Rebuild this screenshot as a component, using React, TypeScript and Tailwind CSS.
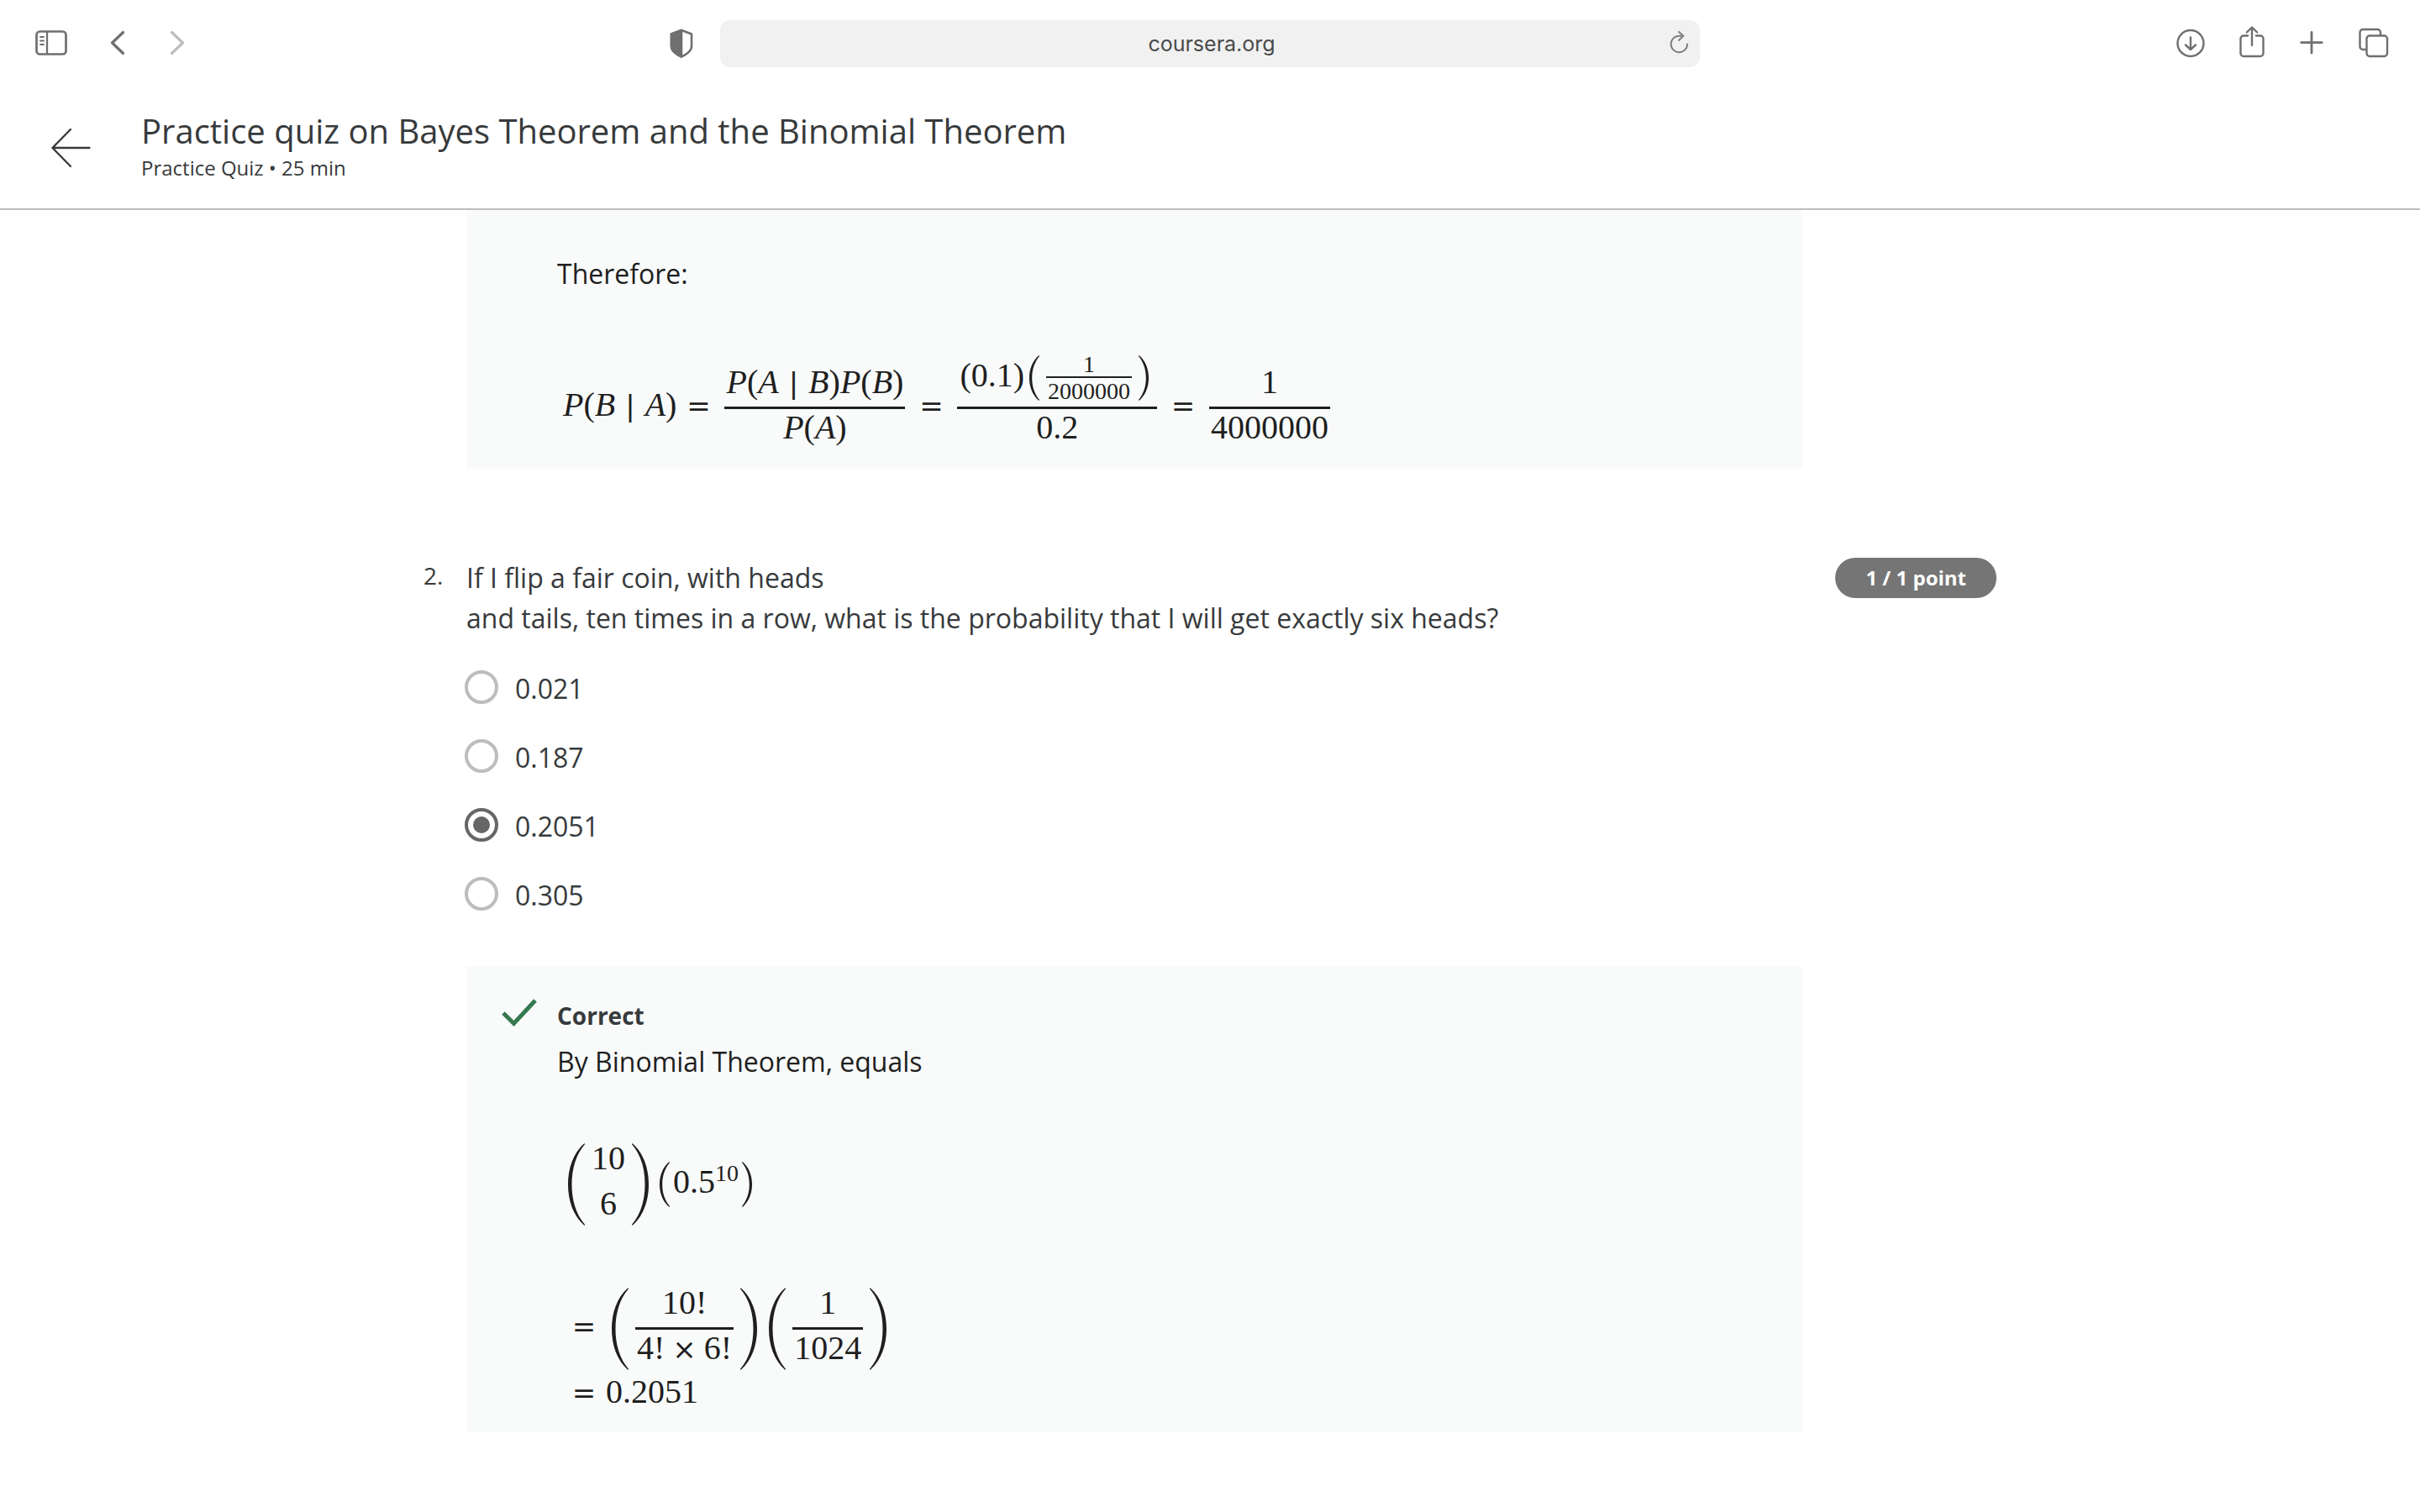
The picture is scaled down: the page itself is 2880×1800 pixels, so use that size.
import React from "react";

const sans = "font-['Open_Sans',sans-serif]";

function IconButton({ label, className = "", children }: { label: string; className?: string; children: React.ReactNode }) {
  return (
    <button type="button" aria-label={label} className={`flex shrink-0 items-center justify-center ${className}`}>
      {children}
    </button>
  );
}

function Toolbar() {
  return (
    <div className="grid grid-cols-[1fr_1166px_1fr] items-center pt-6 text-[#6f6f6f]">
      <div className="flex items-center pr-7 pl-10">
        <IconButton label="Show sidebar">
          <svg width="42" height="42" viewBox="0 0 42 42" fill="none" stroke="currentColor" strokeWidth="2.700">
            <rect x="3.500" y="6.500" width="35" height="27" rx="4" />
            <path d="M16 7v26" strokeWidth="2.300" />
            <path d="M8 13h4M8 17.500h4M8 22h4" strokeWidth="2" strokeLinecap="round" />
          </svg>
        </IconButton>
        <IconButton label="Back" className="ml-11">
          <svg width="28" height="42" viewBox="0 0 28 42" fill="none" stroke="currentColor" strokeWidth="3.200" strokeLinecap="round" strokeLinejoin="round">
            <path d="M20.500 7.500L7.500 20l13 12.500" />
          </svg>
        </IconButton>
        <IconButton label="Forward" className="ml-11 text-[#bdbdbd]">
          <svg width="28" height="42" viewBox="0 0 28 42" fill="none" stroke="currentColor" strokeWidth="3.200" strokeLinecap="round" strokeLinejoin="round">
            <path d="M6.500 7.500l13 12.500-13 12.500" />
          </svg>
        </IconButton>
        <IconButton label="Privacy report" className="ml-auto">
          <svg width="36" height="42" viewBox="0 0 36 42" fill="none" stroke="currentColor" strokeWidth="2.600" strokeLinejoin="round">
            <path d="M18 5L30 9.500V24.500C30 30 23.500 34 18 36.500C12.500 34 6 30 6 24.500V9.500z" />
            <path d="M18 5V36.500C12.500 34 6 30 6 24.500V9.500z" fill="currentColor" />
          </svg>
        </IconButton>
      </div>
      <div className="relative flex h-14 items-center justify-center rounded-xl bg-[#f1f1f1]">
        <input
          aria-label="Address"
          defaultValue="coursera.org"
          className="w-full bg-transparent pl-1 text-center font-[Inter,sans-serif] text-[25px] leading-8 text-[#4a4a4a] outline-none"
        />
        <button type="button" aria-label="Reload" className="absolute right-3 text-[#7f7f7f]">
          <svg width="26" height="30" viewBox="0 0 26 30" fill="none" stroke="currentColor" strokeWidth="2" strokeLinecap="round" strokeLinejoin="round">
            <path d="M23 15.500A9.700 9.700 0 1 1 13.300 5.800h4.500" />
            <path d="M13 1l5.300 4.800-5.300 5.200" />
          </svg>
        </button>
      </div>
      <div className="flex items-center justify-end gap-8 pr-[34px]">
        <IconButton label="Downloads">
          <svg width="40" height="42" viewBox="0 0 40 42" fill="none" stroke="currentColor" strokeWidth="2.400" strokeLinecap="round" strokeLinejoin="round">
            <circle cx="19" cy="20.500" r="15.500" />
            <path d="M19 13.500v14.500M13 22.500l6 5.500 6-5.500" />
          </svg>
        </IconButton>
        <IconButton label="Share">
          <svg width="40" height="42" viewBox="0 0 40 42" fill="none" stroke="currentColor" strokeWidth="2.400" strokeLinecap="round" strokeLinejoin="round">
            <path d="M15 11.500H10a3.500 3.500 0 0 0-3.500 3.500v17.500A3.500 3.500 0 0 0 10 36h20a3.500 3.500 0 0 0 3.500-3.500V15a3.500 3.500 0 0 0-3.500-3.500h-5" />
            <path d="M20 23V2M13.800 7.500L20 1.500 26.200 7.500" />
          </svg>
        </IconButton>
        <IconButton label="New tab">
          <svg width="40" height="42" viewBox="0 0 40 42" fill="none" stroke="currentColor" strokeWidth="2.800" strokeLinecap="round">
            <path d="M19 7.500v24.500M6.700 19.700h24.600" />
          </svg>
        </IconButton>
        <IconButton label="Tab overview">
          <svg width="42" height="42" viewBox="0 0 42 42" fill="none" stroke="currentColor" strokeWidth="2.400" strokeLinejoin="round">
            <rect x="12.500" y="11.500" width="24.500" height="24.500" rx="3.500" />
            <path d="M12.500 28H8a3.500 3.500 0 0 1-3.500-3.500V7.500A3.500 3.500 0 0 1 8 4h17.500A3.500 3.500 0 0 1 29 7.500v4" />
          </svg>
        </IconButton>
      </div>
    </div>
  );
}

function QuizHeader() {
  return (
    <header className="flex items-center border-b-2 border-[#bdbdbd] px-[60px] pt-12 pb-8 text-[#373a3c]">
      <button type="button" aria-label="Back to course" className="mt-2 shrink-0">
        <svg width="48" height="48" viewBox="0 0 48 48" fill="none" stroke="currentColor" strokeWidth="2.300" strokeLinecap="round">
          <path d="M2.500 24h44M24 2L2.500 24L24 46" />
        </svg>
      </button>
      <div className="ml-[60px]">
        <h1 className="text-[40px] leading-[56px]">Practice quiz on Bayes Theorem and the Binomial Theorem</h1>
        <p className="text-2xl leading-8">Practice Quiz • 25 min</p>
      </div>
    </header>
  );
}

/* Tall brackets, drawn to the height of what they enclose. */
function Paren({ side, size }: { side: "left" | "right"; size: "md" | "lg" }) {
  const flip = side === "right" ? "scale-x-[-1]" : "";
  return size === "lg" ? (
    <svg aria-hidden width="20" height="98" viewBox="0 0 20 98" fill="currentColor" className={`shrink-0 ${flip}`}>
      <path d="M19.500 0C6 12 0 30 0 49s6 37 19.500 49l.5-1.200C9 84 4.500 67 4.500 49S9 14 20 1.200z" />
    </svg>
  ) : (
    <svg aria-hidden width="12" height="54" viewBox="0 0 12 54" fill="currentColor" className={`shrink-0 ${flip}`}>
      <path d="M11.300 0C3.500 7 0 16.500 0 27s3.500 20 11.300 27l.7-1C6 45.500 3.200 37 3.200 27S6 8.500 12 1z" />
    </svg>
  );
}

function Fraction({ top, bottom, small = false }: { top: React.ReactNode; bottom: React.ReactNode; small?: boolean }) {
  return small ? (
    <span className="inline-flex flex-col text-center text-[28px] leading-[29px]">
      <span className="border-b-2 border-current">{top}</span>
      <span className="px-[2px] pt-px">{bottom}</span>
    </span>
  ) : (
    <span className="inline-flex flex-col text-center leading-[43px]">
      <span className="flex h-[54px] justify-center border-b-3 border-current px-[2px]">{top}</span>
      <span className="h-[51px] px-[2px]">{bottom}</span>
    </span>
  );
}

const Equals = () => (
  <span className="flex w-6 justify-center pb-1 font-['DejaVu_Sans',sans-serif] text-[34px]">=</span>
);

const Given = () => <span className="mx-3 font-['DejaVu_Sans',sans-serif] text-[34px] leading-none">|</span>;

const Times = () => <span className="mx-[9px] font-['DejaVu_Sans',sans-serif] text-[34px] leading-none">×</span>;

function BayesFormula() {
  return (
    <div className="flex items-center text-[40px] leading-[47px]">
      <span className="pb-2">
        <i>P</i>(<i>B</i>
        <Given />
        <i>A</i>)
      </span>
      <span className="ml-[14px] flex items-center gap-[19px]">
        <Equals />
        <Fraction
          top={
            <span>
              <i>P</i>(<i>A</i>
              <Given />
              <i>B</i>)<i>P</i>(<i>B</i>)
            </span>
          }
          bottom={
            <>
              <i>P</i>(<i>A</i>)
            </>
          }
        />
        <Equals />
        <span className="inline-flex flex-col text-center leading-[43px]">
          <span className="flex h-[66px] border-b-3 border-current pr-[10px] pl-[3px]">
            <span className="pt-1">(0.1)</span>
            <span className="mb-1.5 ml-1.5 flex items-center gap-2">
              <Paren side="left" size="md" />
              <Fraction small top="1" bottom="2000000" />
              <Paren side="right" size="md" />
            </span>
          </span>
          <span className="h-[63px]">0.2</span>
        </span>
        <Equals />
        <Fraction top="1" bottom="4000000" />
      </span>
    </div>
  );
}

function BinomialFormula() {
  return (
    <div className="text-[40px] leading-[45px]">
      <div className="flex items-center pl-[13px]">
        <Paren side="left" size="lg" />
        <span className="mx-2 flex flex-col gap-2 pb-2 text-center leading-[46px]">
          <span>10</span>
          <span>6</span>
        </span>
        <Paren side="right" size="lg" />
        <span className="ml-[13px] flex items-center">
          <Paren side="left" size="md" />
          <span className="mx-1 pb-2">
            0.5<sup className="-top-[14px] text-[28px] leading-none">10</sup>
          </span>
          <Paren side="right" size="md" />
        </span>
      </div>
      <div className="mt-[65px] flex items-center pl-5">
        <Equals />
        <span className="ml-[21px] flex items-center gap-2">
          <Paren side="left" size="lg" />
          <Fraction
            top="10!"
            bottom={
              <>
                4!
                <Times />
                6!
              </>
            }
          />
          <Paren side="right" size="lg" />
        </span>
        <span className="ml-[14px] flex items-center gap-2">
          <Paren side="left" size="lg" />
          <Fraction top="1" bottom="1024" />
          <Paren side="right" size="lg" />
        </span>
      </div>
      <div className="flex items-baseline gap-[14px] pl-5">
        <Equals />
        <span>0.2051</span>
      </div>
    </div>
  );
}

const choices = ["0.021", "0.187", "0.2051", "0.305"];

function Choices() {
  return (
    <div role="radiogroup" aria-label="Answers" className="mt-9 flex flex-col gap-[34px]">
      {choices.map((choice) => (
        <label key={choice} className="flex h-12 items-center gap-5">
          <input
            type="radio"
            name="answer"
            defaultChecked={choice === "0.2051"}
            className="-ml-0.5 mb-1 flex size-10 shrink-0 appearance-none items-center justify-center rounded-full border-4 border-[#bdbdbd] checked:border-[#666] checked:before:size-5 checked:before:rounded-full checked:before:bg-[#666]"
          />
          <span>{choice}</span>
        </label>
      ))}
    </div>
  );
}

export default function App() {
  return (
    <div className={`min-h-screen bg-white ${sans}`}>
      <Toolbar />
      <QuizHeader />
      <main className="pr-[504px] pl-[504px] text-[32px] leading-[48px] text-[#373a3c]">
        <section className="mr-[231px] ml-[51px] bg-[#f9fbfa] px-[108px] pt-[52px] pb-2 text-[#1f1f1f]">
          <p>Therefore:</p>
          <div className="mt-[71px] pl-[7px] font-['Liberation_Serif',serif]">
            <BayesFormula />
          </div>
        </section>
        <section className="mt-[106px] grid grid-cols-[51px_1fr_auto] items-start">
          <span className="text-[28px] leading-[42px]">2.</span>
          <div className="mr-[39px]">
            <p>
              If I flip a fair coin, with heads
              <br />
              and tails, ten times in a row, what is the probability that I will get exactly six heads?
            </p>
            <Choices />
            <div className="mt-[60px] bg-[#f9fbfa] px-[42px] pt-[35px] pb-5">
              <div className="flex items-center">
                <svg aria-hidden width="42" height="40" viewBox="0 0 42 40" fill="none" stroke="#35794f" strokeWidth="5" className="mb-1.5">
                  <path d="M2 20l12.500 12.500L40 5" />
                </svg>
                <h2 className="ml-6 text-[28px] leading-[48px] font-bold">Correct</h2>
              </div>
              <div className="ml-[66px] text-[#1f1f1f]">
                <p className="mt-[7px]">By Binomial Theorem, equals</p>
                <div className="mt-[68px] font-['Liberation_Serif',serif]">
                  <BinomialFormula />
                </div>
              </div>
            </div>
          </div>
          <span className="flex h-12 items-center rounded-full bg-[#757575] px-9 text-2xl font-bold text-white">1 / 1 point</span>
        </section>
      </main>
    </div>
  );
}
